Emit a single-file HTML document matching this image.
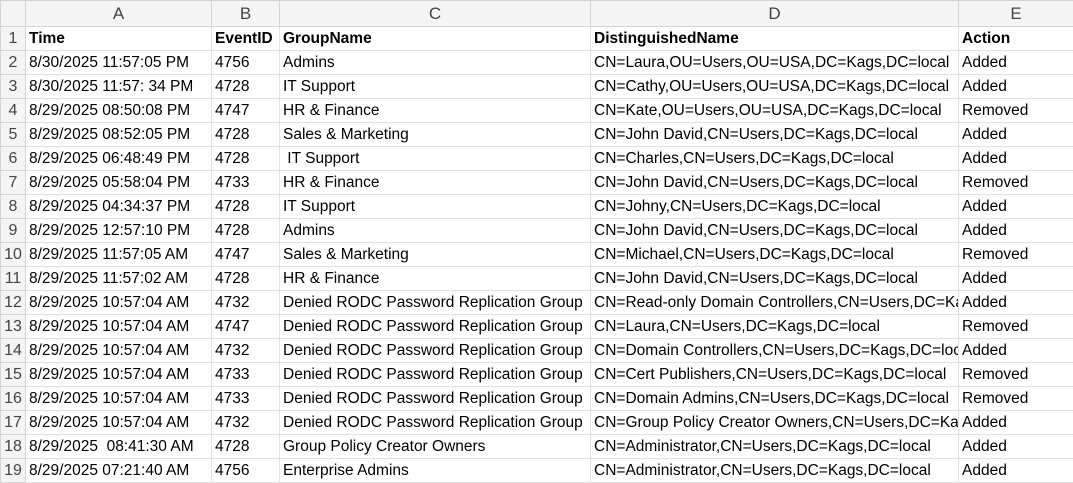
<!DOCTYPE html><html><head><style>
body{margin:0;background:#fff;width:1073px;height:482px;overflow:hidden}
table{border-collapse:collapse;table-layout:fixed;width:1073px;font-family:"Liberation Sans",sans-serif;font-size:15.5px;color:#000}
td{border:1px solid #e1e1e1;height:23px;padding:0 0 0 3px;white-space:nowrap;overflow:hidden;line-height:23px}
tr.h td{height:25px;background:#f5f5f5;text-align:center;color:#444;font-size:17px;border-color:#d4d4d4;padding:0}
td.r{background:#f5f5f5;text-align:center;color:#444;border-color:#d4d4d4;padding:0;font-size:16px}
tr.b td:not(.r){font-weight:bold}
</style></head><body>
<table>
<colgroup><col style="width:25px"><col style="width:186px"><col style="width:68px"><col style="width:311px"><col style="width:368px"><col style="width:115px"></colgroup>
<tr class="h"><td></td><td>A</td><td>B</td><td>C</td><td>D</td><td>E</td></tr>
<tr class="b"><td class="r">1</td><td>Time</td><td>EventID</td><td>GroupName</td><td>DistinguishedName</td><td>Action</td></tr>
<tr><td class="r">2</td><td>8/30/2025 11:57:05 PM</td><td>4756</td><td>Admins</td><td>CN=Laura,OU=Users,OU=USA,DC=Kags,DC=local</td><td>Added</td></tr>
<tr><td class="r">3</td><td>8/30/2025 11:57: 34 PM</td><td>4728</td><td>IT Support</td><td>CN=Cathy,OU=Users,OU=USA,DC=Kags,DC=local</td><td>Added</td></tr>
<tr><td class="r">4</td><td>8/29/2025 08:50:08 PM</td><td>4747</td><td>HR &amp; Finance</td><td>CN=Kate,OU=Users,OU=USA,DC=Kags,DC=local</td><td>Removed</td></tr>
<tr><td class="r">5</td><td>8/29/2025 08:52:05 PM</td><td>4728</td><td>Sales &amp; Marketing</td><td>CN=John David,CN=Users,DC=Kags,DC=local</td><td>Added</td></tr>
<tr><td class="r">6</td><td>8/29/2025 06:48:49 PM</td><td>4728</td><td>&nbsp;IT Support</td><td>CN=Charles,CN=Users,DC=Kags,DC=local</td><td>Added</td></tr>
<tr><td class="r">7</td><td>8/29/2025 05:58:04 PM</td><td>4733</td><td>HR &amp; Finance</td><td>CN=John David,CN=Users,DC=Kags,DC=local</td><td>Removed</td></tr>
<tr><td class="r">8</td><td>8/29/2025 04:34:37 PM</td><td>4728</td><td>IT Support</td><td>CN=Johny,CN=Users,DC=Kags,DC=local</td><td>Added</td></tr>
<tr><td class="r">9</td><td>8/29/2025 12:57:10 PM</td><td>4728</td><td>Admins</td><td>CN=John David,CN=Users,DC=Kags,DC=local</td><td>Added</td></tr>
<tr><td class="r">10</td><td>8/29/2025 11:57:05 AM</td><td>4747</td><td>Sales &amp; Marketing</td><td>CN=Michael,CN=Users,DC=Kags,DC=local</td><td>Removed</td></tr>
<tr><td class="r">11</td><td>8/29/2025 11:57:02 AM</td><td>4728</td><td>HR &amp; Finance</td><td>CN=John David,CN=Users,DC=Kags,DC=local</td><td>Added</td></tr>
<tr><td class="r">12</td><td>8/29/2025 10:57:04 AM</td><td>4732</td><td>Denied RODC Password Replication Group</td><td>CN=Read-only Domain Controllers,CN=Users,DC=Kags,DC=local</td><td>Added</td></tr>
<tr><td class="r">13</td><td>8/29/2025 10:57:04 AM</td><td>4747</td><td>Denied RODC Password Replication Group</td><td>CN=Laura,CN=Users,DC=Kags,DC=local</td><td>Removed</td></tr>
<tr><td class="r">14</td><td>8/29/2025 10:57:04 AM</td><td>4732</td><td>Denied RODC Password Replication Group</td><td>CN=Domain Controllers,CN=Users,DC=Kags,DC=local</td><td>Added</td></tr>
<tr><td class="r">15</td><td>8/29/2025 10:57:04 AM</td><td>4733</td><td>Denied RODC Password Replication Group</td><td>CN=Cert Publishers,CN=Users,DC=Kags,DC=local</td><td>Removed</td></tr>
<tr><td class="r">16</td><td>8/29/2025 10:57:04 AM</td><td>4733</td><td>Denied RODC Password Replication Group</td><td>CN=Domain Admins,CN=Users,DC=Kags,DC=local</td><td>Removed</td></tr>
<tr><td class="r">17</td><td>8/29/2025 10:57:04 AM</td><td>4732</td><td>Denied RODC Password Replication Group</td><td>CN=Group Policy Creator Owners,CN=Users,DC=Kags,DC=local</td><td>Added</td></tr>
<tr><td class="r">18</td><td>8/29/2025 &nbsp;08:41:30 AM</td><td>4728</td><td>Group Policy Creator Owners</td><td>CN=Administrator,CN=Users,DC=Kags,DC=local</td><td>Added</td></tr>
<tr><td class="r">19</td><td>8/29/2025 07:21:40 AM</td><td>4756</td><td>Enterprise Admins</td><td>CN=Administrator,CN=Users,DC=Kags,DC=local</td><td>Added</td></tr>
</table>
</body></html>
